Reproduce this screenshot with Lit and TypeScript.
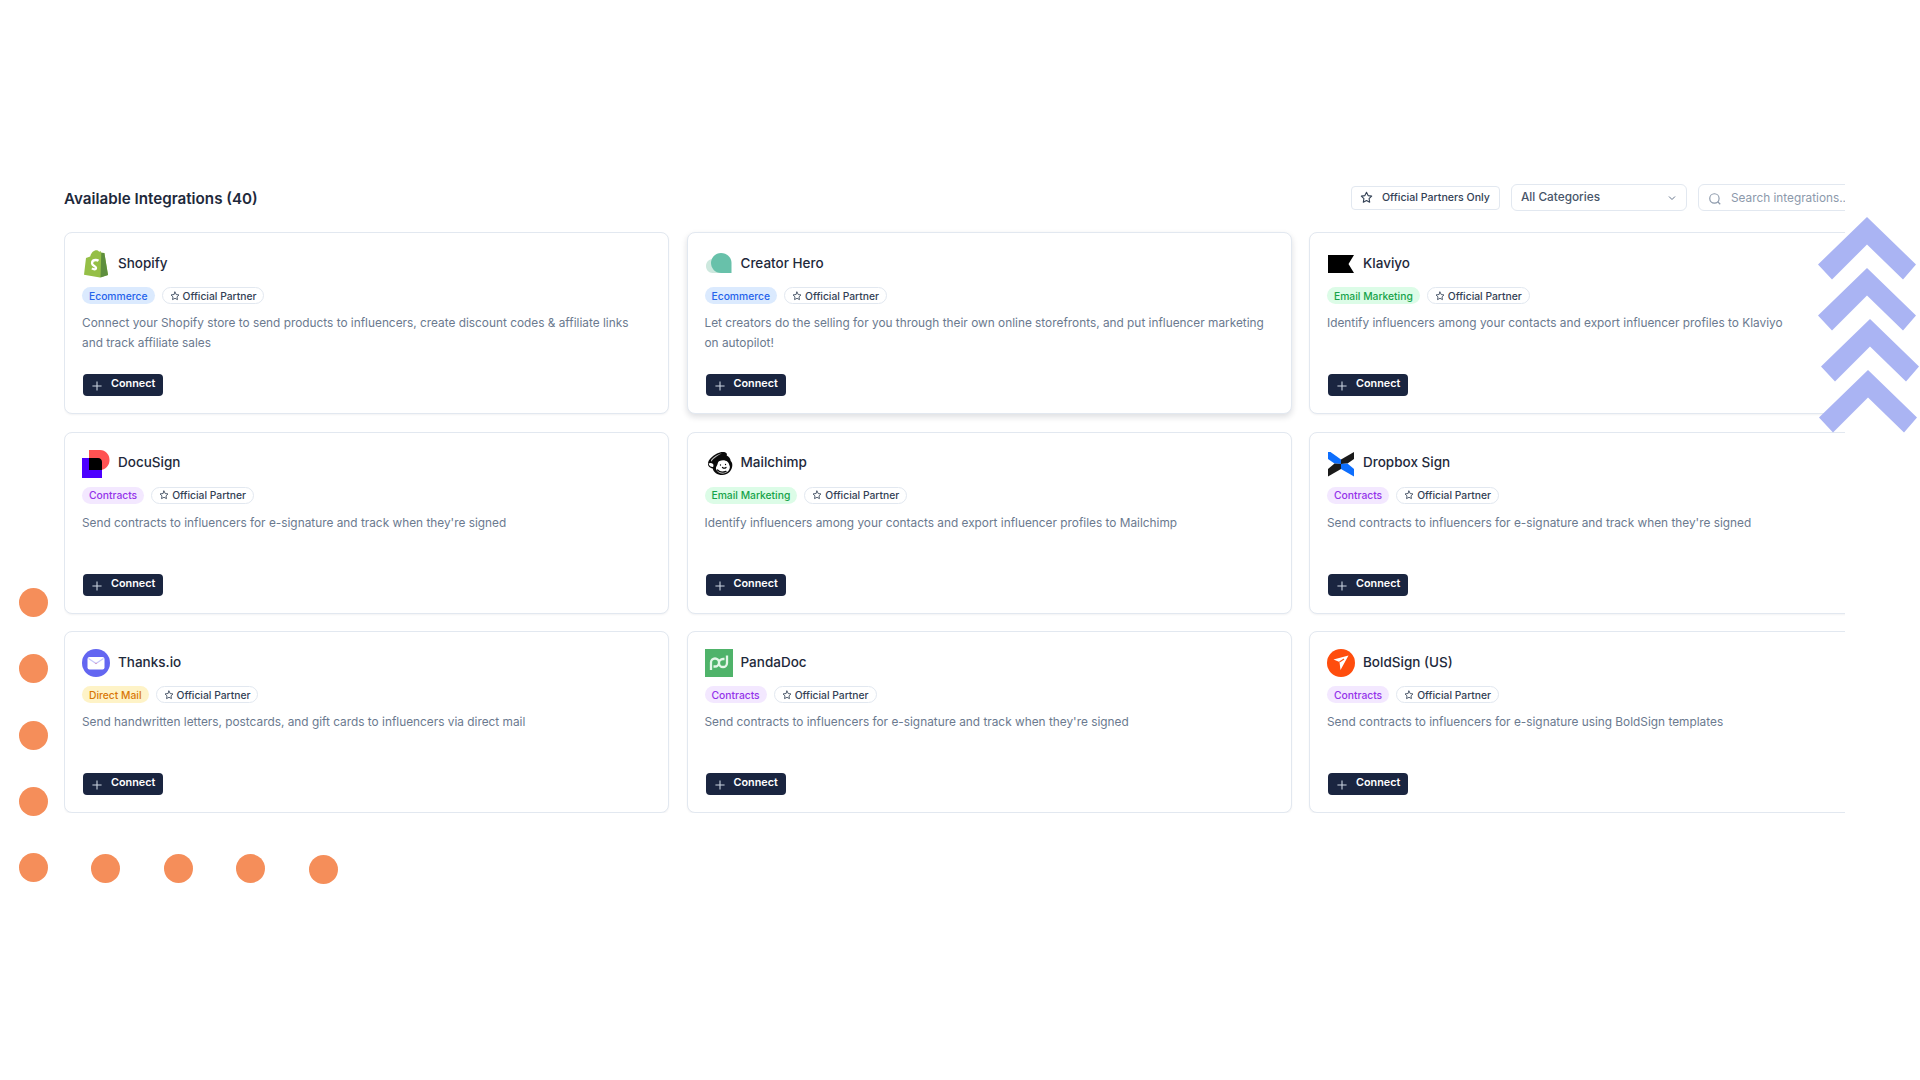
import { LitElement, css, html, svg } from "lit";
import { customElement } from "lit/decorators.js";

type Integration = {
  name: string;
  category: "ecommerce" | "email" | "contracts" | "mail";
  label: string;
  desc: string;
  logo: unknown;
};

const star = html`<svg class="star" viewBox="0 0 24 24" fill="none" stroke="currentColor" stroke-width="2" stroke-linejoin="round" stroke-linecap="round">
  <path d="M12 2.5l2.95 5.98 6.6.96-4.78 4.65 1.13 6.57L12 17.56l-5.9 3.1 1.13-6.57-4.78-4.65 6.6-.96z" />
</svg>`;

const logos = {
  shopify: svg`<svg class="logo" viewBox="0 0 28 28">
    <path d="M4 8l4.200-1.400C9 3 11.500.3 14.500.3c1.200 0 2 .6 2.500 1.400l1.800-.4.6 1.400 3 .3L26 25l-8 2.500-16-2.800z" fill="#95bf47"/>
    <path d="M19.300 2.700l2.700.3c.2 0 .3.100.4.300L26 25l-7.500 2.500z" fill="#5e8e3e"/>
    <path d="M16.500 10.800c-.7-.5-1.700-.8-2.700-.8-2.400 0-3.800 1.500-3.800 3.200 0 2.600 4 2.800 4 4.600 0 .9-.7 1.500-1.600 1.500-1.200 0-2.500-.9-2.500-.9" fill="none" stroke="#fff" stroke-width="2.300"/>
  </svg>`,
  creatorHero: svg`<svg class="logo" viewBox="0 0 28 28">
    <path d="M8 9C3.800 9 1 12 1 16c0 4 2.800 7 6.500 7H15V10z" fill="#cde8de"/>
    <path d="M16 3c5.500 0 10.500 4 10.500 10v10H16C10 23 6 18 6 13 6 7.500 10.500 3 16 3z" fill="#68c1aa"/>
  </svg>`,
  klaviyo: svg`<svg class="logo" viewBox="0 0 28 28"><path d="M1 5h26l-5.500 9 5.500 9H1z" fill="#000"/></svg>`,
  docusign: svg`<svg class="logo" viewBox="0 0 28 28">
    <path d="M0 8h20v20H0z" fill="#4c00ff"/>
    <path d="M7 0h11c5.500 0 9.500 4.500 9.500 10S23.500 20 18 20H7z" fill="#ff5252"/>
    <path d="M7 8h9c2.500 0 4 1.800 4 4v8H7z" fill="#000"/>
  </svg>`,
  mailchimp: svg`<svg class="logo" viewBox="0 0 28 28">
    <path d="M12 3.500c3-1.800 8-2.300 9.500-.3.800 1.200.2 2.300.2 2.300 2.300 1 3.800 3 4 5.500 1.300 1.200 2 3.300 1.500 5.500-.8 4.800-4.500 8.500-10 8.500-5 0-8.500-2.500-9.500-6.500-3-.5-5-2.500-4.700-5C3.300 9.500 7.500 6 12 3.500z" fill="#0a0a0a"/>
    <path d="M6 10c2.500-3 7-6 11-6.800-3.500 1.800-8 4.500-11 8.500z" fill="#bdbdbd"/>
    <path d="M3.500 13.500c1.500-1 3.500-.7 4.500.5.700 1 .5 2.300 0 3-1.500.2-4-1-4.500-3.500z" fill="#fff"/>
    <path d="M14.500 11c2.800-1.300 6-1 8 .7 1.500 1.300 1.500 2.800 2.300 4.500.6 3.300-2.600 7.300-7 7.300-3.300 0-6-1.800-6.800-4.500-.4-2 1-3 1.500-4.700.4-1.500.7-2.800 2-3.300z" fill="#fff"/>
    <path d="M12.500 20c2 2.200 5.500 2.600 8.500 1.300M15.500 15h.01M20.500 14.500h.01M17.500 17.500c1 .8 2.500.8 3.500 0" fill="none" stroke="#0a0a0a" stroke-width="1.300" stroke-linecap="round"/>
  </svg>`,
  dropbox: svg`<svg class="logo" viewBox="0 0 28 28">
    <path d="M1 2h2.500L14 9.500V14l-6.500-.5L1 9z" fill="#0d6efd"/>
    <path d="M27 2v7l-6.500 4.500L14 14V9.500z" fill="#1a1a1a"/>
    <path d="M1 26.500V19l6.500-5.500L14 14v5z" fill="#1a1a1a"/>
    <path d="M27 26.500l-13-7.500v-5l6.500-.5L27 19z" fill="#0d6efd"/>
  </svg>`,
  thanks: svg`<svg class="logo" viewBox="0 0 28 28">
    <circle cx="14" cy="14" r="14" fill="#6366f1"/>
    <rect x="5.500" y="8" width="17" height="12.500" rx="2" fill="#fff"/>
    <path d="M6.500 9.500l7.500 5 7.500-5" fill="none" stroke="#c7c8fa" stroke-width="1.300"/>
    <path d="M12.300 13.300l1.700 1.200 1.700-1.200-1.700 1.800z" fill="#e5466b"/>
  </svg>`,
  pandadoc: svg`<svg class="logo" viewBox="0 0 28 28">
    <rect width="28" height="28" fill="#4fb36a"/>
    <path d="M6 21v-7.500a4 4 0 1 1 4 4h-1.500M22 6.500v7.500a4 4 0 1 1-4-4h1.500" fill="none" stroke="#e4f6e8" stroke-width="2.300"/>
  </svg>`,
  boldsign: svg`<svg class="logo" viewBox="0 0 28 28">
    <circle cx="14" cy="14" r="14" fill="#ff4d0d"/>
    <path d="M21.500 6.500L6.500 10.500l6 2.500 1 8z" fill="#fff"/>
    <path d="M12.500 13l4.500-3" stroke="#ff4d0d" stroke-width="1.200"/>
  </svg>`,
};

const contractsDesc = "Send contracts to influencers for e-signature and track when they're signed";

const integrations: Integration[] = [
  { name: "Shopify", category: "ecommerce", label: "Ecommerce", logo: logos.shopify, desc: "Connect your Shopify store to send products to influencers, create discount codes & affiliate links and track affiliate sales" },
  { name: "Creator Hero", category: "ecommerce", label: "Ecommerce", logo: logos.creatorHero, desc: "Let creators do the selling for you through their own online storefronts, and put influencer marketing on autopilot!" },
  { name: "Klaviyo", category: "email", label: "Email Marketing", logo: logos.klaviyo, desc: "Identify influencers among your contacts and export influencer profiles to Klaviyo" },
  { name: "DocuSign", category: "contracts", label: "Contracts", logo: logos.docusign, desc: contractsDesc },
  { name: "Mailchimp", category: "email", label: "Email Marketing", logo: logos.mailchimp, desc: "Identify influencers among your contacts and export influencer profiles to Mailchimp" },
  { name: "Dropbox Sign", category: "contracts", label: "Contracts", logo: logos.dropbox, desc: contractsDesc },
  { name: "Thanks.io", category: "mail", label: "Direct Mail", logo: logos.thanks, desc: "Send handwritten letters, postcards, and gift cards to influencers via direct mail" },
  { name: "PandaDoc", category: "contracts", label: "Contracts", logo: logos.pandadoc, desc: contractsDesc },
  { name: "BoldSign (US)", category: "contracts", label: "Contracts", logo: logos.boldsign, desc: "Send contracts to influencers for e-signature using BoldSign templates" },
];

// decoration, free placed on the slide
const dots = [
  [33, 602], [33, 668], [33, 735], [33, 801], [33, 867],
  [105.5, 868], [178, 868], [250.5, 868], [323, 869],
];
const chevrons = [
  [1867, 217], [1867, 268], [1870, 319], [1868, 370],
];

@customElement("app-root")
export class AppRoot extends LitElement {
  static styles = css`
    :host {
      display: block;
      position: relative;
      height: 1080px;
      background: #fff;
      overflow: hidden;
      font-family: Inter, "Liberation Sans", sans-serif;
      color: #1e293b;
    }
    .clip {
      margin-left: 64px;
      padding-top: 184px;
      width: 1781px;
      overflow: hidden;
    }
    .inner {
      width: 1851px;
    }
    .head {
      display: flex;
      align-items: center;
      justify-content: space-between;
      height: 27px;
      margin-bottom: 21px;
    }
    h2 {
      margin: 0;
      padding-top: 1px;
      font-size: 15.2px;
      font-weight: 600;
      color: #1e293b;
    }
    .tools {
      display: flex;
      align-items: center;
      gap: 11px;
    }
    .partner-btn {
      display: flex;
      align-items: center;
      gap: 9px;
      box-sizing: border-box;
      height: 24px;
      width: 149px;
      padding: 0 8px;
      font-size: 10.6px;
      font-weight: 500;
      white-space: nowrap;
      color: #334155;
      border: 1px solid #e2e8f0;
      border-radius: 4px;
      background: #fff;
    }
    .partner-btn .star {
      width: 13px;
      height: 13px;
      flex: none;
    }
    .select {
      display: flex;
      align-items: center;
      justify-content: space-between;
      box-sizing: border-box;
      height: 27px;
      width: 176px;
      padding: 0 8px 1px 9px;
      font-size: 11.8px;
      font-weight: 500;
      color: #475569;
      border: 1px solid #e2e8f0;
      border-radius: 6px;
    }
    .select svg {
      width: 12px;
      height: 12px;
      color: #64748b;
      margin-top: 2px;
    }
    .search {
      display: flex;
      align-items: center;
      gap: 9px;
      box-sizing: border-box;
      height: 27px;
      width: 217px;
      padding: 0 9px;
      font-size: 11.8px;
      white-space: nowrap;
      color: #8c99ab;
      border: 1px solid #e2e8f0;
      border-radius: 6px;
    }
    .search svg {
      width: 14px;
      height: 14px;
      flex: none;
      margin-top: 2px;
    }
    .grid {
      display: grid;
      grid-template-columns: repeat(3, 605px);
      grid-auto-rows: 182px;
      gap: 17.5px;
    }
    .card {
      display: flex;
      flex-direction: column;
      box-sizing: border-box;
      padding: 17px;
      background: #fff;
      border: 1px solid #e2e8f0;
      border-radius: 8px;
      box-shadow: 0 1px 2px rgba(15, 23, 42, 0.05);
    }
    .card.hover {
      box-shadow: 0 3px 6px rgba(15, 23, 42, 0.14);
    }
    .title {
      display: flex;
      align-items: center;
      gap: 8px;
      height: 28px;
    }
    .logo {
      width: 28px;
      height: 28px;
      flex: none;
    }
    .name {
      padding-bottom: 3px;
      font-size: 13.5px;
      font-weight: 500;
      color: #1e293b;
    }
    .tags {
      display: flex;
      align-items: center;
      gap: 7px;
      margin-top: 9px;
    }
    .tag {
      display: flex;
      align-items: center;
      height: 17px;
      padding: 0 7px;
      font-size: 10.3px;
      font-weight: 500;
      border-radius: 9px;
      box-sizing: border-box;
    }
    .tag.ecommerce { background: #dbeafe; color: #2563eb; }
    .tag.email { background: #dcfce7; color: #16a34a; }
    .tag.contracts { background: #f3e8ff; color: #9333ea; }
    .tag.mail { background: #fef3c7; color: #d97706; }
    .tag.partner {
      gap: 3px;
      background: #fff;
      color: #334155;
      border: 1px solid #e2e8f0;
    }
    .tag.partner .star {
      width: 10px;
      height: 10px;
    }
    p {
      margin: 10px 4px 0 0;
      font-size: 11.85px;
      line-height: 19.5px;
      color: #6b7a8f;
    }
    .connect {
      display: flex;
      align-items: center;
      align-self: flex-start;
      gap: 9px;
      box-sizing: border-box;
      height: 22px;
      margin: auto 0 0 1px;
      padding: 0 8px 3px 9px;
      font-size: 10.8px;
      font-weight: 600;
      color: #fff;
      background: #1a2540;
      border-radius: 4px;
    }
    .connect svg {
      width: 10px;
      height: 10px;
      color: #cbd5e1;
      margin-top: 5px;
    }
    .dot {
      position: absolute;
      width: 29px;
      height: 29px;
      margin: -14.5px 0 0 -14.5px;
      border-radius: 50%;
      background: #f58e5a;
    }
    .chevron {
      position: absolute;
      width: 98px;
      height: 63px;
      margin-left: -49px;
      fill: #aab4f3;
    }
  `;

  private card(item: Integration) {
    return html`<div class="card ${item.name === "Creator Hero" ? "hover" : ""}">
      <div class="title">${item.logo}<span class="name">${item.name}</span></div>
      <div class="tags">
        <span class="tag ${item.category}">${item.label}</span>
        <span class="tag partner">${star}Official Partner</span>
      </div>
      <p>${item.desc}</p>
      <div class="connect">
        <svg viewBox="0 0 12 12" fill="none" stroke="currentColor" stroke-width="1.300"><path d="M6 .5v11M.5 6h11" /></svg>
        Connect
      </div>
    </div>`;
  }

  render() {
    return html`
      <div class="clip">
        <div class="inner">
          <div class="head">
            <h2>Available Integrations (40)</h2>
            <div class="tools">
              <div class="partner-btn">${star}Official Partners Only</div>
              <div class="select">
                All Categories
                <svg viewBox="0 0 24 24" fill="none" stroke="currentColor" stroke-width="2"><path d="M6 9l6 6 6-6" /></svg>
              </div>
              <div class="search">
                <svg viewBox="0 0 24 24" fill="none" stroke="currentColor" stroke-width="2"><circle cx="11" cy="11" r="8" /><path d="M21 21l-4.300-4.300" /></svg>
                Search integrations...
              </div>
            </div>
          </div>
          <div class="grid">${integrations.map((i) => this.card(i))}</div>
        </div>
      </div>
      ${dots.map(([x, y]) => html`<div class="dot" style="left:${x}px;top:${y}px"></div>`)}
      ${chevrons.map(([x, y]) => html`<svg class="chevron" style="left:${x}px;top:${y}px" viewBox="0 0 98 63">
        <path d="M49 0l49 47.500L85 62.500 49 27.500 14 62.500 0 47.500z" />
      </svg>`)}
    `;
  }
}
